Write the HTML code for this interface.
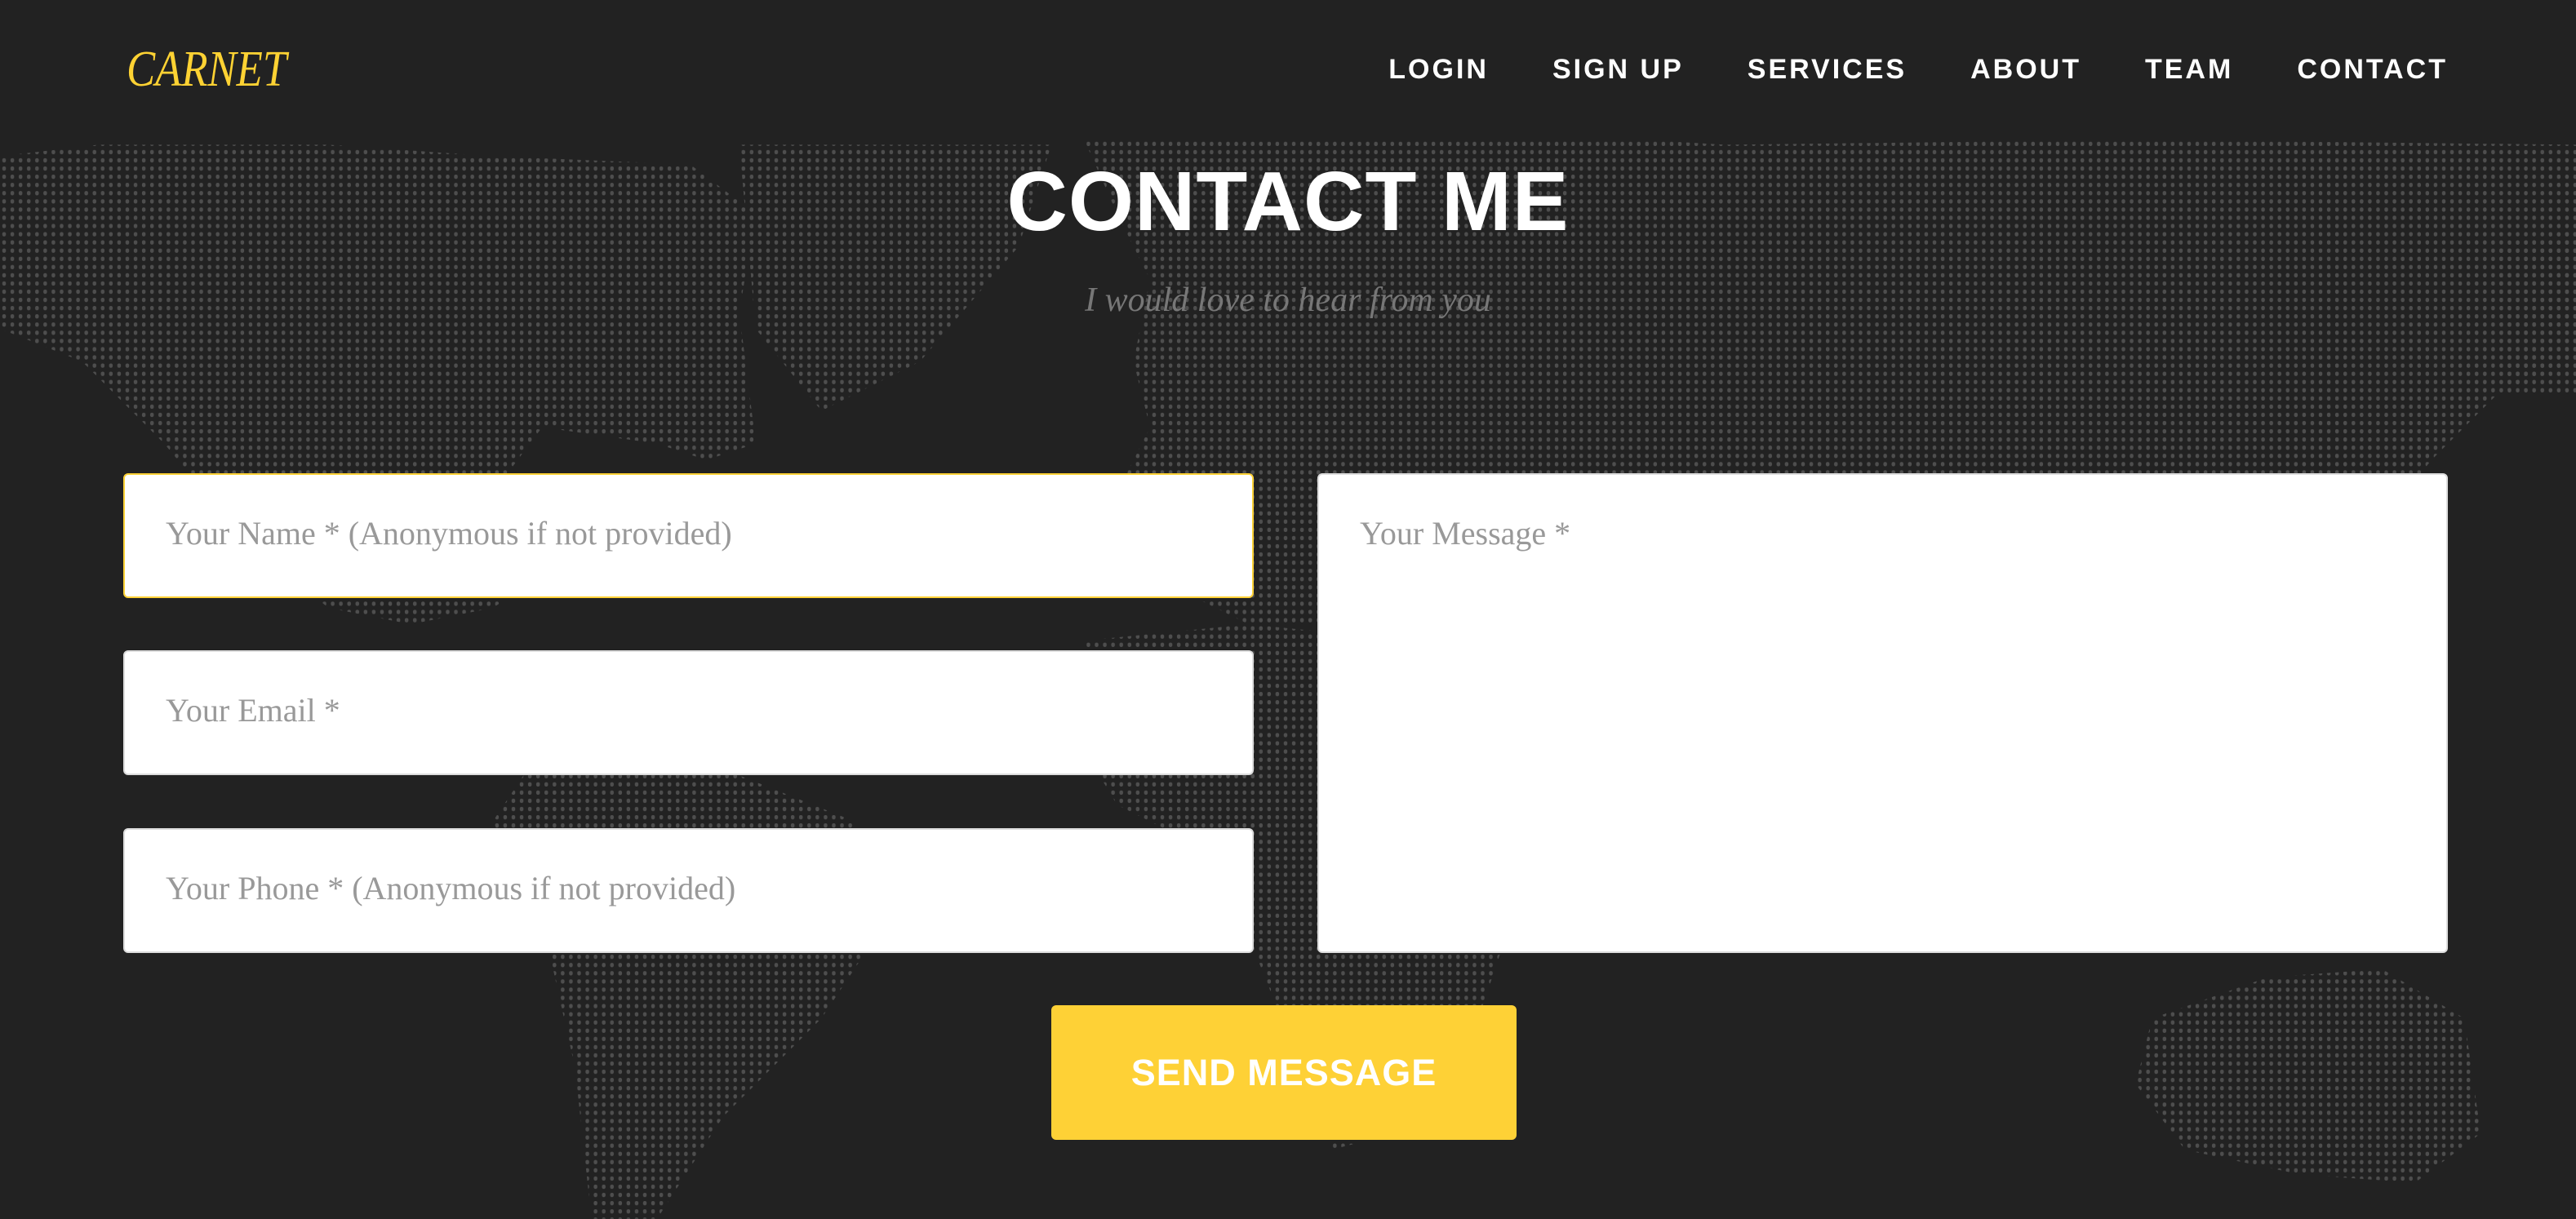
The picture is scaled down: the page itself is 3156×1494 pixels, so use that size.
<!DOCTYPE html>
<html><head><meta charset="utf-8"><style>
*{margin:0;padding:0;box-sizing:border-box}
body{width:3156px;height:1494px;background:#222;overflow:hidden;position:relative;font-family:"Liberation Sans",sans-serif}
svg.map{position:absolute;left:0;top:0}
.logo{position:absolute;left:155px;top:50px;font-family:"Liberation Serif",serif;font-style:italic;color:#fdd233;font-size:62px;transform:scaleX(.85);transform-origin:left}
.nav{position:absolute;top:66px;right:157px;display:flex;gap:78px;color:#fff;font-size:34px;letter-spacing:3px;font-weight:bold}
h1{position:absolute;top:188px;left:0;width:3156px;text-align:center;color:#fff;font-size:103px;font-weight:bold;letter-spacing:1px}
.sub{position:absolute;top:344px;left:0;width:3156px;text-align:center;color:#777;font-family:"Liberation Serif",serif;font-style:italic;font-size:42px}
.f{position:absolute;background:#fff;border:2px solid #ddd;border-radius:6px;color:#999;font-family:"Liberation Serif",serif;font-size:40px;padding:48px 0 0 50px}
.btn{position:absolute;left:1288px;top:1232px;width:570px;height:165px;background:#fed136;border-radius:6px;color:#fff;font-weight:bold;font-size:45px;text-align:center;line-height:165px;letter-spacing:1px}
</style></head><body>
<svg class="map" width="3156" height="1494" viewBox="0 0 1568 742">
<defs><pattern id="d" width="5" height="5" patternUnits="userSpaceOnUse"><rect x="1.4" y="1.2" width="2.2" height="2.6" rx="1" fill="#4e4e4e"/></pattern></defs>
<g fill="url(#d)">
<polygon points="0,95 60,88 200,88 300,95 420,100 460,130 450,190 460,270 430,280 400,270 330,260 300,300 330,350 300,370 250,380 200,370 150,330 100,270 50,220 0,200"/>
<polygon points="450,88 640,88 620,150 560,220 500,250 460,200"/>
<polygon points="660,85 1000,85 1050,88 1300,85 1568,88 1568,220 1520,240 1480,280 1440,330 1380,370 1300,400 1200,430 1100,440 1000,430 950,420 900,400 820,380 760,380 700,350 680,300 700,260 690,220 700,170 680,130"/>
<polygon points="660,390 760,380 860,390 940,420 960,480 920,560 900,620 850,690 810,700 780,620 740,520 680,490 650,440"/>
<polygon points="320,470 420,460 520,500 540,560 500,620 440,680 400,742 360,742 350,650 330,560 300,500"/>
<polygon points="1310,620 1380,595 1450,590 1500,620 1510,690 1470,720 1400,715 1330,700 1300,660"/>
<polygon points="1520,150 1568,140 1568,240 1525,240"/>
</g></svg>
<div class="logo">CARNET</div>
<div class="nav"><span>LOGIN</span><span>SIGN UP</span><span>SERVICES</span><span>ABOUT</span><span>TEAM</span><span>CONTACT</span></div>
<h1>CONTACT ME</h1>
<div class="sub">I would love to hear from you</div>
<div class="f" style="left:151px;top:580px;width:1385px;height:153px;border-color:#fed136">Your Name * (Anonymous if not provided)</div>
<div class="f" style="left:151px;top:797px;width:1385px;height:153px">Your Email *</div>
<div class="f" style="left:151px;top:1015px;width:1385px;height:153px">Your Phone * (Anonymous if not provided)</div>
<div class="f" style="left:1614px;top:580px;width:1385px;height:588px">Your Message *</div>
<div class="btn">SEND MESSAGE</div>
</body></html>
